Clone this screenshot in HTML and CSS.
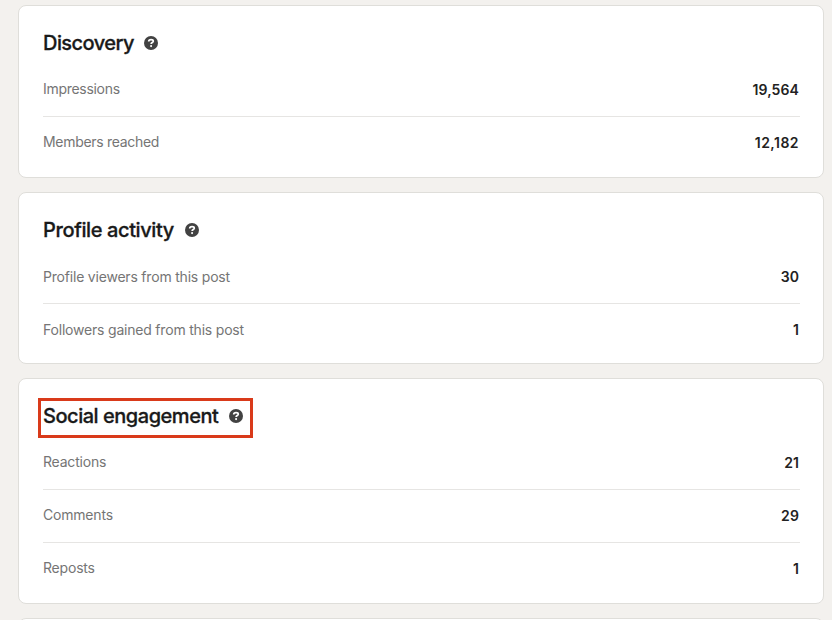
FILE: index.html
```html
<!DOCTYPE html>
<html lang="en">
<head>
  <meta charset="UTF-8">
  <meta name="viewport" content="width=device-width, initial-scale=1.0">
  <title>Post analytics</title>
  <link rel="stylesheet" href="styles.css">
</head>
<body>
  <svg class="sprite" width="0" height="0">
    <symbol id="help" viewBox="0 0 14 14">
      <circle cx="7" cy="7" r="7" fill="#424242"/>
      <path d="M4.7 5.4C4.7 4.2 5.7 3.6 7.05 3.6C8.4 3.6 9.3 4.2 9.3 5.2C9.3 6.5 7.1 6.6 7.1 8.1" fill="none" stroke="#fff" stroke-width="1.7"/>
      <circle cx="7.1" cy="10.1" r="1.05" fill="#fff"/>
    </symbol>
  </svg>

  <main class="analytics">
    <section class="card">
      <div class="card-header">
        <h2 class="discovery">Discovery</h2>
        <svg class="help-icon"><use href="#help"/></svg>
      </div>
      <div class="row"><span class="label tight">Impressions</span><span class="value">19,564</span></div>
      <div class="row"><span class="label tight">Members reached</span><span class="value wide">12,182</span></div>
    </section>

    <section class="card profile-card">
      <div class="card-header">
        <h2 class="profile">Profile activity</h2>
        <svg class="help-icon"><use href="#help"/></svg>
      </div>
      <div class="row"><span class="label">Profile viewers from this post</span><span class="value">30</span></div>
      <div class="row"><span class="label">Followers gained from this post</span><span class="value">1</span></div>
    </section>

    <section class="card">
      <div class="card-header highlighted">
        <h2>Social engagement</h2>
        <svg class="help-icon"><use href="#help"/></svg>
      </div>
      <div class="row"><span class="label">Reactions</span><span class="value">21</span></div>
      <div class="row"><span class="label">Comments</span><span class="value">29</span></div>
      <div class="row"><span class="label">Reposts</span><span class="value">1</span></div>
    </section>

    <section class="card next-card"></section>
  </main>
</body>
</html>
```
FILE: styles.css
```css
*,
*::after {
  box-sizing: border-box;
}
body {
  margin: 0;
  background: #f3f1ee;
  font-family: Inter, "Liberation Sans", sans-serif;
}
.sprite {
  display: block;
}
.analytics {
  display: flex;
  flex-direction: column;
  gap: 14px;
  height: 620px;
  overflow: hidden;
  padding: 5px 8px 0 18px;
}
.card {
  flex-shrink: 0;
  background: #fff;
  border: 1px solid #dfdeda;
  border-radius: 8px;
  padding: 0 23px 7px 24px;
}
.profile-card {
  padding-bottom: 6px;
}
.next-card {
  height: 20px;
}
.card-header {
  display: flex;
  align-items: center;
  gap: 10.5px;
  width: fit-content;
  height: 58px;
  padding-top: 16px;
  position: relative;
}
h2 {
  margin: 0;
  font-size: 20px;
  line-height: 24px;
  font-weight: 500;
  letter-spacing: -0.47px;
  color: #191919;
  -webkit-text-stroke: 0.3px #191919;
}
.discovery {
  letter-spacing: -0.55px;
}
.profile {
  letter-spacing: -0.38px;
}
.help-icon {
  width: 14px;
  height: 14px;
}
.highlighted::after {
  content: "";
  position: absolute;
  top: 19px;
  left: -5px;
  width: 215px;
  height: 40px;
  border: 3px solid #d93a1a;
}
.row {
  display: flex;
  justify-content: space-between;
  align-items: center;
  height: 53px;
  padding: 0 1px 2px 0;
  border-bottom: 1px solid #e6e5e3;
}
.row:last-child {
  border-bottom-color: transparent;
}
.label {
  font-size: 14px;
  line-height: 20px;
  letter-spacing: -0.2px;
  color: #757575;
}
.tight {
  letter-spacing: -0.3px;
}
.profile-card .label {
  padding-top: 1px;
}
.value {
  margin-top: 1px;
  font-size: 14px;
  line-height: 20px;
  font-weight: 600;
  letter-spacing: 0.1px;
  color: #222;
}
.wide {
  letter-spacing: 0.45px;
}
```
